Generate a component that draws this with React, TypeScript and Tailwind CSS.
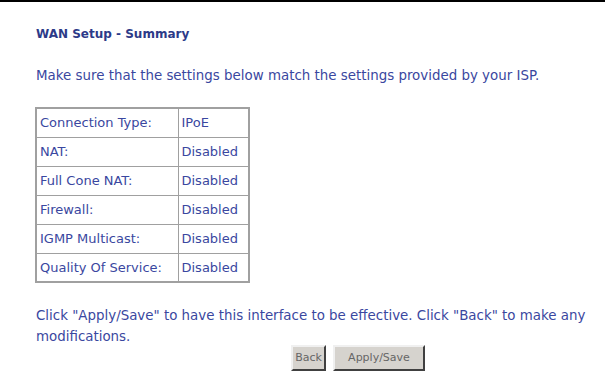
export default function App() {
  const rows: [string, string][] = [
    ["Connection Type:", "IPoE"],
    ["NAT:", "Disabled"],
    ["Full Cone NAT:", "Disabled"],
    ["Firewall:", "Disabled"],
    ["IGMP Multicast:", "Disabled"],
    ["Quality Of Service:", "Disabled"],
  ];
  return (
    <div className="w-[607px] h-[375px] bg-white overflow-hidden text-[13.4px] text-[#3a47a0]" style={{ fontFamily: '"DejaVu Sans", Verdana, sans-serif' }}>
      <div className="w-[605px] h-[2px] bg-black" />
      <div className="pl-[36px]">
        <div className="pt-[23px] font-bold text-[12px] text-[#2c3a88] leading-[18px]">WAN Setup - Summary</div>
        <div className="pt-[24px] leading-[18px]">Make sure that the settings below match the settings provided by your ISP.</div>
        <table className="mt-[22px] -ml-px border-collapse border-2 border-[#a0a0a0] text-[13px]">
          <tbody>
            {rows.map(([k, v]) => (
              <tr key={k} className="h-[29px]">
                <td className="border border-[#a0a0a0] px-[3px] w-[142px]">{k}</td>
                <td className="border border-[#a0a0a0] px-[3px] w-[71px]">{v}</td>
              </tr>
            ))}
          </tbody>
        </table>
        <div className="pt-[22px] leading-[21px] w-[570px]">
          Click "Apply/Save" to have this interface to be effective. Click "Back" to make any modifications.
        </div>
        <div className="flex gap-[7px] pl-[255px] pt-[0px] -mt-[2px]">
          <button className="h-[26px] w-[35px] bg-[#d6d3ce] text-[#666] text-[11px] border-2 border-t-[#f0f0f0] border-l-[#f0f0f0] border-r-[#404040] border-b-[#404040]">Back</button>
          <button className="h-[26px] w-[92px] bg-[#d6d3ce] text-[#666] text-[11px] border-2 border-t-[#f0f0f0] border-l-[#f0f0f0] border-r-[#404040] border-b-[#404040]">Apply/Save</button>
        </div>
      </div>
    </div>
  );
}
